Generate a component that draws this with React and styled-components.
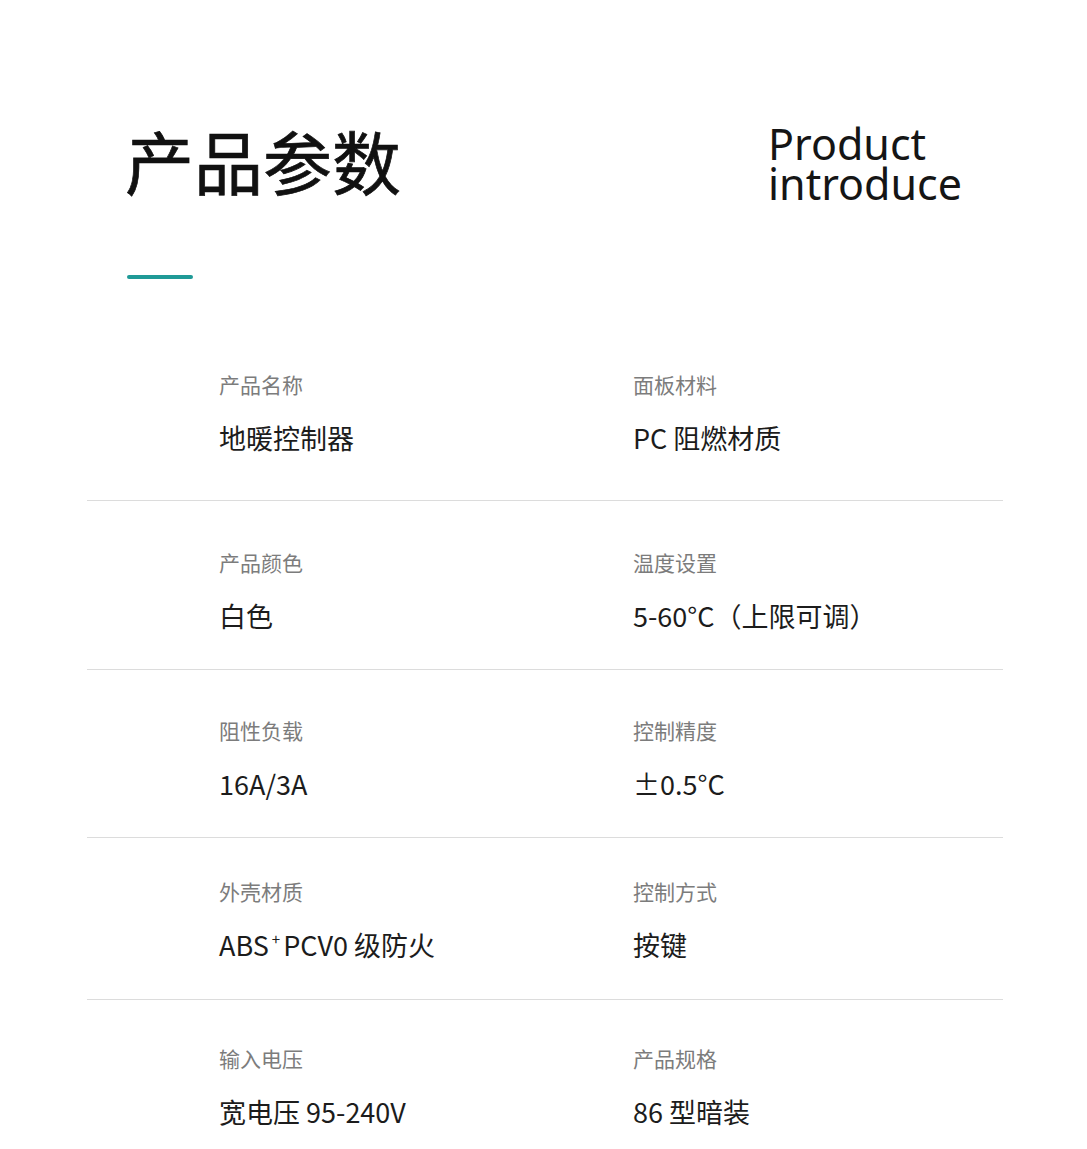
import React from "react";
import styled, { createGlobalStyle } from "styled-components";

const Global = createGlobalStyle`
  html, body { margin: 0; padding: 0; background: #ffffff; }
  body { font-family: "Noto Sans CJK SC", "Noto Sans", sans-serif; }
`;

const Page = styled.div`
  width: 1087px;
  min-height: 1149px;
  padding-top: 126px;
  box-sizing: border-box;
  background: #fff;
`;

const Header = styled.header`
  display: flex;
  align-items: flex-start;
  padding-left: 125px;
`;

const Title = styled.h1`
  margin: 0;
  width: 643px;
  font-family: "Noto Sans CJK SC", sans-serif;
  font-size: 69px;
  line-height: 69px;
  font-weight: 400;
  -webkit-text-stroke: 0.7px #111;
  color: #111;
  letter-spacing: 0;
`;

const EnTitle = styled.div`
  margin-top: -2px;
  display: flex;
  flex-direction: column;
`;

const EnLine = styled.span`
  display: block;
  height: 40px;
  font-family: "Noto Sans", "Open Sans", sans-serif;
  font-size: 43px;
  line-height: 40px;
  font-weight: 400;
  color: #151515;
  white-space: nowrap;
`;

const Accent = styled.div`
  width: 66px;
  height: 4px;
  border-radius: 2px;
  background: #1f9a97;
  margin: 71px 0 0 127px;
`;

const List = styled.div`
  margin: 44px 84px 0 87px;
`;

const Row = styled.div`
  display: grid;
  grid-template-columns: 414px 1fr;
  padding: ${(p) => p.$pt}px 0 ${(p) => p.$pb}px 132px;
  border-bottom: ${(p) => (p.$last ? "none" : "1.5px solid #dcdcdc")};
`;

const Cell = styled.div`
  display: flex;
  flex-direction: column;
  gap: 26px;
`;

const Label = styled.div`
  font-size: 21px;
  line-height: 24px;
  color: #7c7c7c;
`;

const Value = styled.div`
  font-size: 27px;
  line-height: 32px;
  color: #1c1c1c;
  white-space: nowrap;
`;

const Sup = styled.sup`
  font-size: 15px;
  line-height: 0;
  vertical-align: 0;
  position: relative;
  top: -11px;
  margin: 0 3px 0 3px;
`;

const rows = [
  { pt: 49, pb: 46, l: ["产品名称", "地暖控制器"], r: ["面板材料", "PC 阻燃材质"] },
  { pt: 49, pb: 37, l: ["产品颜色", "白色"], r: ["温度设置", "5-60°C（上限可调）"] },
  { pt: 48, pb: 37, l: ["阻性负载", "16A/3A"], r: ["控制精度", "±0.5°C"] },
  {
    pt: 41,
    pb: 38,
    l: [
      "外壳材质",
      <>
        ABS<Sup>+</Sup>PCV0 级防火
      </>,
    ],
    r: ["控制方式", "按键"],
  },
  { pt: 46, pb: 30, l: ["输入电压", "宽电压 95-240V"], r: ["产品规格", "86 型暗装"], last: true },
];

export default function App() {
  return (
    <>
      <Global />
      <Page>
        <Header>
          <Title>产品参数</Title>
          <EnTitle>
            <EnLine>Product</EnLine>
            <EnLine>introduce</EnLine>
          </EnTitle>
        </Header>
        <Accent />
        <List>
          {rows.map((row, i) => (
            <Row key={i} $pt={row.pt} $pb={row.pb} $last={row.last}>
              <Cell>
                <Label>{row.l[0]}</Label>
                <Value>{row.l[1]}</Value>
              </Cell>
              <Cell>
                <Label>{row.r[0]}</Label>
                <Value>{row.r[1]}</Value>
              </Cell>
            </Row>
          ))}
        </List>
      </Page>
    </>
  );
}
